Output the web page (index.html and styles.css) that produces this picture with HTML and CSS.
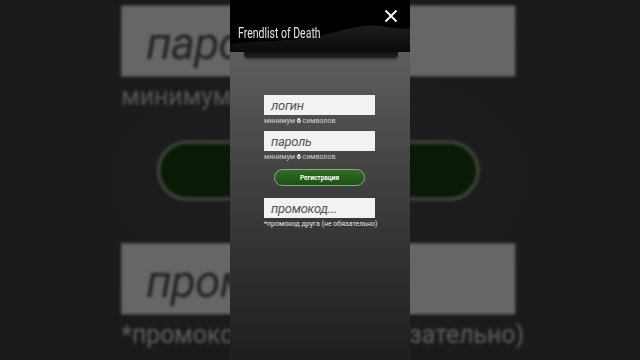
FILE: index.html
```html
<!DOCTYPE html>
<html lang="ru">
<head>
    <meta charset="UTF-8">
    <meta name="viewport" content="width=device-width, initial-scale=1.0">
    <title>Frendlist of Death</title>
    <link rel="stylesheet" href="styles.css">
</head>
<body>
    <div class="stage">
        <!-- Размытая копия формы на фоне -->
        <div class="backdrop">
            <div class="screen ghost">
                <div class="header-space"></div>
                <div class="form">
                    <div class="field"><span>логин</span></div>
                    <div class="hint">минимум <b>6</b> символов</div>
                    <div class="field"><span>пароль</span></div>
                    <div class="hint">минимум <b>6</b> символов</div>
                    <div class="btn-row"><div class="btn"><span>Регистрация</span></div></div>
                    <div class="field promo"><span>промокод...</span></div>
                    <div class="hint note">*промокод друга (не обязательно)</div>
                </div>
            </div>
        </div>

        <!-- Экран телефона -->
        <div class="screen phone">
            <div class="header">
                <svg class="hills" width="180" height="52" viewBox="0 0 180 52">
                    <defs>
                        <linearGradient id="hillGrad" x1="0" y1="0" x2="0" y2="1">
                            <stop offset="0" stop-color="#1d1d1d"/>
                            <stop offset="1" stop-color="#0a0a0a"/>
                        </linearGradient>
                    </defs>
                    <path d="M0 44 C30 40 60 42 90 36 C115 30 130 24 150 26 C165 28 172 30 180 28 L180 52 L0 52 Z" fill="url(#hillGrad)"/>
                </svg>
                <div class="title"><span>Frendlist of Death</span></div>
                <svg class="close" width="14" height="14" viewBox="0 0 14 14">
                    <path d="M1.5 1.5 L12.5 12.5 M12.5 1.5 L1.5 12.5" stroke="#fff" stroke-width="1.8" fill="none"/>
                </svg>
            </div>
            <div class="ledge"></div>
            <div class="form">
                <div class="field"><span>логин</span></div>
                <div class="hint">минимум <b>6</b> символов</div>
                <div class="field"><span>пароль</span></div>
                <div class="hint">минимум <b>6</b> символов</div>
                <div class="btn-row"><div class="btn"><span>Регистрация</span></div></div>
                <div class="field promo"><span>промокод...</span></div>
                <div class="hint note">*промокод друга (не обязательно)</div>
            </div>
        </div>
    </div>
</body>
</html>
```

FILE: styles.css
```css
body {
    margin: 0;
    background-color: #1c1c1c;
    font-family: Roboto, "Noto Sans", sans-serif;
}
.stage {
    position: relative;
    width: 640px;
    height: 360px;
    overflow: hidden;
    background: radial-gradient(ellipse at center, #1e1e1e 0%, #191919 100%);
}
.backdrop {
    position: absolute;
    top: 0;
    left: 0;
    width: 640px;
    height: 360px;
    transform-origin: 320px 141px;
    transform: translateY(-100px) scale(3.55);
    filter: brightness(0.42) blur(0.4px);
}
.screen {
    width: 180px;
    height: 360px;
    margin: 0 auto;
}
.header-space {
    height: 58px;
}
.ghost .btn {
    background: #173e10;
}
.phone {
    position: relative;
    background: linear-gradient(#5c5c5c 60px, #3c3c3c 200px, #1e1e1e 360px);
}
.header {
    position: relative;
    height: 52px;
    background: #000;
    display: flex;
    align-items: flex-end;
    padding: 0 12px 11px 8px;
    box-sizing: border-box;
}
.hills {
    position: absolute;
    left: 0;
    top: 0;
}
.title {
    position: relative;
    color: #e4e4e4;
    font-size: 15px;
    line-height: 16px;
}
.title span {
    display: inline-block;
    transform: scaleX(0.7);
    transform-origin: left center;
    white-space: nowrap;
}
.close {
    position: absolute;
    top: 9px;
    right: 12px;
}
.ledge {
    height: 6px;
    margin: 0 12px 0 14px;
    background: linear-gradient(#101010, #232323);
    border-radius: 0 0 4px 4px;
    box-shadow: 0 2px 3px rgba(0, 0, 0, 0.35);
}
.form {
    padding: 37px 35px 0 34px;
}
.field {
    height: 20px;
    background: #f2f2f2;
    padding-left: 7px;
    display: flex;
    align-items: center;
}
.field span {
    font-style: italic;
    font-size: 13px;
    letter-spacing: -0.3px;
    color: #555;
}
.hint {
    font-size: 7px;
    line-height: 9px;
    color: #cfcfcf;
    margin: 2px 0 5px;
    white-space: nowrap;
}
.hint b {
    color: #fff;
}
.btn-row {
    display: flex;
    justify-content: center;
    margin: 7px 0 12px;
}
.btn {
    width: 89px;
    height: 15px;
    border-radius: 9px;
    border: 1px solid #8fa682;
    background: linear-gradient(#2f6e22, #1c4f14);
    display: flex;
    align-items: center;
    justify-content: center;
}
.btn span {
    color: #fff;
    font-size: 6.5px;
    font-weight: bold;
}
.note {
    color: #e2e2e2;
    margin-top: 2px;
}
```
